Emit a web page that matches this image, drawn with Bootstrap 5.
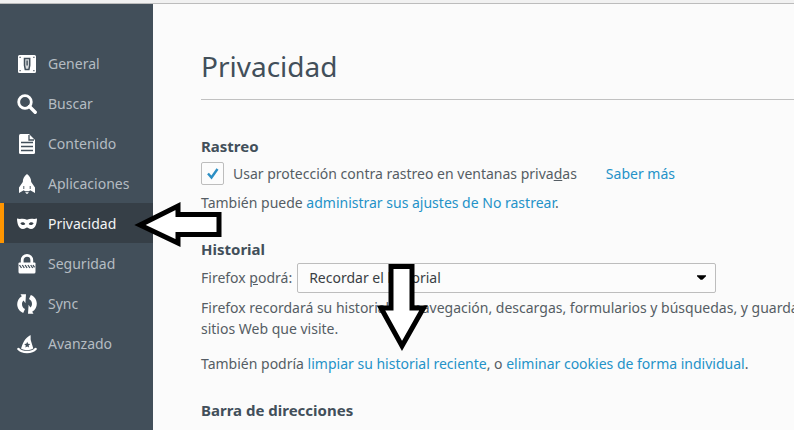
<!DOCTYPE html>
<html lang="es">
<head>
<meta charset="utf-8">
<meta name="viewport" content="width=device-width, initial-scale=1">
<title>Privacidad</title>
<link rel="stylesheet" href="https://cdn.jsdelivr.net/npm/bootstrap@5.3.0/dist/css/bootstrap.min.css">
<style>
body{font-family:"Noto Sans","Open Sans",sans-serif;font-size:14px;line-height:20px;color:#555d64;background:#fbfbfb}
a{color:#2492c8;text-decoration:none}
a:hover{text-decoration:underline}
.top-strip{height:4px;background:#f1f1f1;border-bottom:1px solid #bcbcbc}
.prefs-side{width:153px;padding-top:39px;background:#424f5a}
.prefs-side .nav-link{height:40px;padding:2px 0 0 13px;gap:11px;color:#b5bcc2;border-left:4px solid transparent;border-radius:0}
.prefs-side .nav-link.active{background:#363f47;border-left-color:#ff9500;color:#f3f4f5}
.prefs-side svg{width:20px;height:20px;fill:#fff}
.prefs-main{padding:42px 0 8px 48px;min-width:0}
.page-title{font-size:28px;line-height:40px;padding-bottom:13px;margin-bottom:36px;font-weight:400;color:#424f5a;border-bottom:1px solid #c1c1c1}
.group-title{font-size:15px;line-height:20px;font-weight:700;color:#424f5a}
.check-row{margin:6px 0 8px}
.check-row label{margin:0 29px 0 9px}
.prefs-main .form-check-input{width:23px;height:23px;margin:0;border:1px solid #bdbdbd;border-radius:2px;background-color:#fcfcfc}
.prefs-main .form-check-input:checked{background-image:url("data:image/svg+xml,%3Csvg xmlns='http://www.w3.org/2000/svg' viewBox='0 0 21 21'%3E%3Cpath d='M6 10.5l3.5 4L15.5 6' fill='none' stroke='%232d8fc4' stroke-width='2.4'/%3E%3C/svg%3E");background-size:100%}
.prefs-main .form-select{width:419px;height:30px;padding:0 32px 0 11px;font-size:14px;line-height:20px;color:#3a3f44;border:1px solid #bdbdbd;border-radius:2px;background-color:#fcfcfc;background-image:url("data:image/svg+xml,%3Csvg xmlns='http://www.w3.org/2000/svg' viewBox='0 0 10 6'%3E%3Cpath d='M0 0h10v1L6 5H4L0 1z'/%3E%3C/svg%3E");background-size:9px 6px;background-position:right 9px center}
.select-row label{margin-right:5px}
.intro{line-height:21px;margin-bottom:15px}
.group-end{margin-bottom:26px}
.pointer{position:absolute;fill:#fff;stroke:#000;stroke-width:5;pointer-events:none}
.pointer-left{left:134px;top:200px}
.pointer-down{left:374px;top:262px}
</style>
</head>
<body class="position-relative overflow-hidden min-vh-100 d-flex flex-column">
<div class="top-strip"></div>
<div class="d-flex flex-grow-1">
<nav class="prefs-side nav flex-column flex-nowrap flex-shrink-0" aria-label="Preferencias">
<a class="nav-link d-flex align-items-center" href="#"><svg viewBox="0 0 20 20"><path fill-rule="evenodd" d="M2.500 1h15a1.500 1.500 0 0 1 1.500 1.500v15a1.500 1.500 0 0 1-1.500 1.500h-15A1.500 1.500 0 0 1 1 17.500v-15A1.500 1.500 0 0 1 2.500 1zM2.500 2.700v1.200h1.200V2.700zM16.300 2.700v1.200h1.200V2.700zM2.500 16.100v1.200h1.200v-1.200zM16.300 16.100v1.200h1.200v-1.200z"/><path d="M7.500 4.500h5.200v7l-.8 4H8.300l-.8-4z" fill="#d9dcde" stroke="#424f5a" stroke-width="1.500"/><path fill="#424f5a" d="M9.400 6.500h1.400v5H9.400z"/></svg>General</a>
<a class="nav-link d-flex align-items-center" href="#"><svg viewBox="0 0 20 20"><circle cx="8" cy="8" r="6.300" fill="none" stroke="#fff" stroke-width="2.800"/><path d="M12.500 12.500l5.700 5.700" stroke="#fff" stroke-width="3.400" stroke-linecap="round"/></svg>Buscar</a>
<a class="nav-link d-flex align-items-center" href="#"><svg viewBox="0 0 20 20"><path d="M3.500 0H12l6 6v12.500a1.500 1.500 0 0 1-1.500 1.500h-13A1.500 1.500 0 0 1 2 18.500v-17A1.500 1.500 0 0 1 3.500 0z"/><path d="M12 1v5h5M4 8.500h12M4 12.500h12M4 16.500h12" fill="none" stroke="#424f5a" stroke-width="1.300"/></svg>Contenido</a>
<a class="nav-link d-flex align-items-center" href="#"><svg viewBox="0 0 20 20"><path d="M10 0c3 2.200 4.200 5 4.200 8l3.800 5.500V19l-4.800-2.700-.9.700H7.700l-.9-.7L2 19v-5.500L5.800 8c0-3 1.200-5.800 4.200-8z"/><path d="M6.800 12v3M13.200 12v3" stroke="#424f5a" stroke-width=".9"/><path d="M8 17.800h4L10 21z" fill="#d4d8db"/></svg>Aplicaciones</a>
<a class="nav-link active d-flex align-items-center" href="#" aria-current="page"><svg viewBox="0 0 20 20"><path fill-rule="evenodd" d="M0 4.500c3 1 6.500-.5 10 1.200 3.500-1.700 7-.2 10-1.200-.1 3.500-.8 10.500-6 10.500-2 0-3-1.500-4-1.500S8 15 6 15C.8 15 .1 8 0 4.500zM3.300 9.200c1.500 2.400 4 2.300 5 .9-1-2.100-3.300-2.300-5-.9zM16.700 9.200c-1.500 2.400-4 2.300-5 .9 1-2.100 3.300-2.300 5-.9z"/></svg>Privacidad</a>
<a class="nav-link d-flex align-items-center" href="#"><svg viewBox="0 0 20 20"><path d="M5.200 10V6.200a4.800 4.800 0 0 1 9.600 0V10" fill="none" stroke="#fff" stroke-width="2.800"/><path d="M2.500 8.500h15q1 0 1 1V18q0 1.500-1.500 1.500H3Q1.500 19.500 1.500 18V9.500q0-1 1-1z"/><path d="M2.500 11l2 3M5.300 11l2 3M8.100 11l2 3M10.900 11l2 3M13.700 11l2 3M16 11l1.500 2.300" stroke="#424f5a" stroke-width="1.300"/></svg>Seguridad</a>
<a class="nav-link d-flex align-items-center" href="#"><svg viewBox="0 0 20 20"><path d="M9 .3L3.500.2l1.300 2C1.700 4 .2 7 .2 10.200c0 4 2.500 7.400 6 8.700l1.800-3.800C6 14 5 12.500 5 10c0-1.500.6-2.600 1.600-3.600l1.800 2.800z"/><path d="M11 19.700l5.500.1-1.300-2c3.100-1.800 4.600-4.800 4.600-8 0-4-2.500-7.400-6-8.700L12 4.900C14 6 15 7.500 15 10c0 1.500-.6 2.600-1.600 3.600l-1.800-2.800z"/></svg>Sync</a>
<a class="nav-link d-flex align-items-center" href="#"><svg viewBox="0 0 20 20"><path d="M13.500 1c.5 2.800-.4 4 .8 7l2 6.500c-4 2-8.600 2-12.300 0C6 9.500 7 4.500 13.500 1z"/><path d="M10.200 7.800l.9 2 2.200.2-1.700 1.400.5 2.200-1.900-1.200-1.900 1.200.5-2.200L7.100 10l2.200-.2z" fill="#424f5a"/><path d="M1.500 15c3.500 4 13.500 4 17 0" fill="none" stroke="#fff" stroke-width="2.500" stroke-linecap="round"/></svg>Avanzado</a>
</nav>
<main class="prefs-main flex-grow-1 overflow-hidden">
<h1 class="page-title">Privacidad</h1>
<section>
<h2 class="group-title mb-0">Rastreo</h2>
<div class="check-row d-flex align-items-center">
<input class="form-check-input flex-shrink-0" type="checkbox" id="tracking" checked>
<label for="tracking">Usar protección contra rastreo en ventanas priva<u>d</u>as</label>
<a href="#">Saber más</a>
</div>
<p class="group-end">También puede <a href="#">administrar sus ajustes de No rastrear</a>.</p>
</section>
<section>
<h2 class="group-title mb-1">Historial</h2>
<div class="select-row d-flex align-items-center mb-1">
<label class="text-nowrap" for="history">Firefox <u>p</u>odrá:</label>
<select class="form-select" id="history"><option>Recordar el historial</option></select>
</div>
<p class="intro text-nowrap">Firefox recordará su historial de navegación, descargas, formularios y búsquedas, y guardará las cookies de los<br>sitios Web que visite.</p>
<p class="group-end">También podría <a href="#">limpiar su historial reciente</a>, o <a href="#">eliminar cookies de forma individual</a>.</p>
</section>
<section>
<h2 class="group-title mb-0">Barra de direcciones</h2>
</section>
</main>
</div>
<svg class="pointer pointer-left" width="90" height="50" viewBox="134 200 90 50" aria-hidden="true"><path d="M140 225l38-19v8.500h41v20h-41v8.500z"/></svg>
<svg class="pointer pointer-down" width="56" height="92" viewBox="374 262 56 92" aria-hidden="true"><path d="M391 266.500h21V308h11.500L402 346l-21-38h10z"/></svg>
<script src="https://cdn.jsdelivr.net/npm/bootstrap@5.3.0/dist/js/bootstrap.bundle.min.js"></script>
</body>
</html>
